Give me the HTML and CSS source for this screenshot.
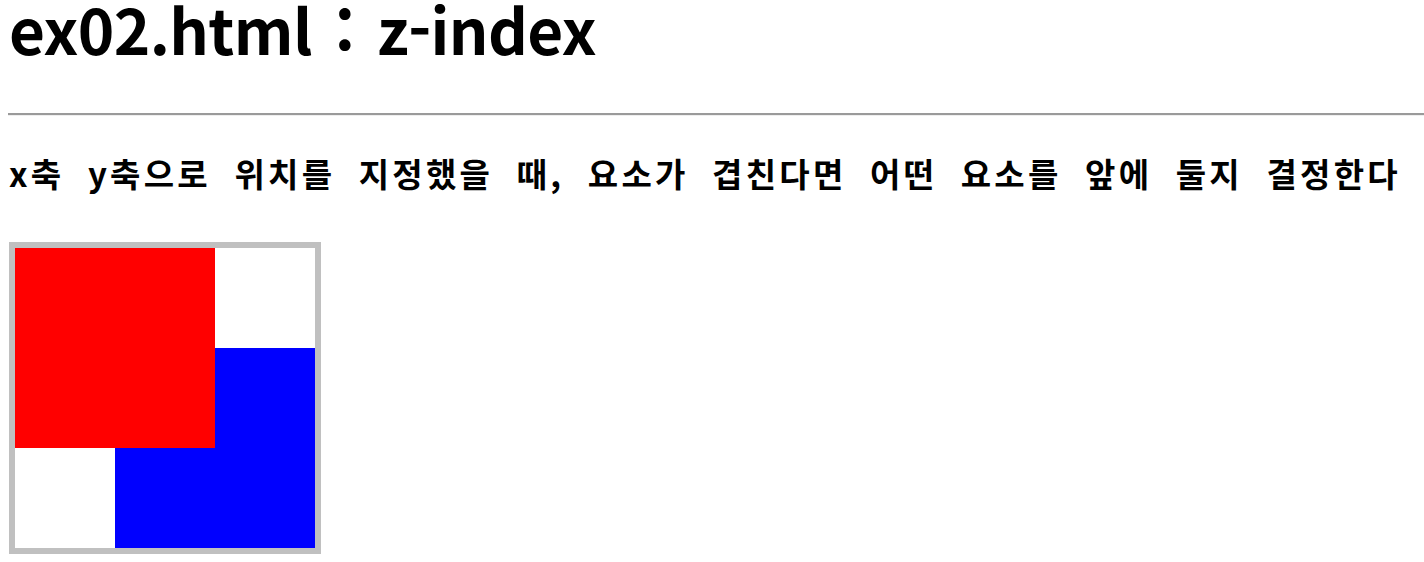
FILE: index.html
```html
<!DOCTYPE html>
<html lang="ko">
<head>
    <meta charset="utf-8">
    <title>ex02.html : z-index</title>
    <link rel="stylesheet" href="styles.css">
</head>
<body>
    <h1>ex02.html : z-index</h1>
    <hr>
    <h2>x축 y축으로 위치를 지정했을 때, 요소가 겹친다면 어떤 요소를 앞에 둘지 결정한다</h2>

    <div class="stage">
        <div class="box red"></div>
        <div class="box blue"></div>
    </div>
</body>
</html>
```

FILE: styles.css
```css
body {
    font-family: "Noto Sans CJK KR", "Noto Sans", sans-serif;
    margin: 0 0 0 8px;
}
h1 {
    font-size: 62px;
    font-weight: bold;
    letter-spacing: -0.6px;
    word-spacing: 6px;
    line-height: 56px;
    margin: 0 0 0 1px;
}
hr {
    margin: 57px 0 0 0;
    border: none;
    border-top: 2px solid #9a9a9a;
    border-bottom: 1px solid #eeeeee;
}
h2 {
    font-size: 33px;
    font-weight: bold;
    letter-spacing: 3.25px;
    word-spacing: 11px;
    line-height: 28px;
    margin: 43px 0 0 1px;
}
.stage {
    position: relative;
    width: 300px;
    height: 300px;
    border: 6px solid #c0c0c0;
    margin: 55px 0 0 1px;
}
.box {
    position: absolute;
    width: 200px;
    height: 200px;
}
.red {
    background-color: red;
    left: 0;
    top: 0;
    z-index: 2;
}
.blue {
    background-color: blue;
    left: 100px;
    top: 100px;
    z-index: 1;
}
```
